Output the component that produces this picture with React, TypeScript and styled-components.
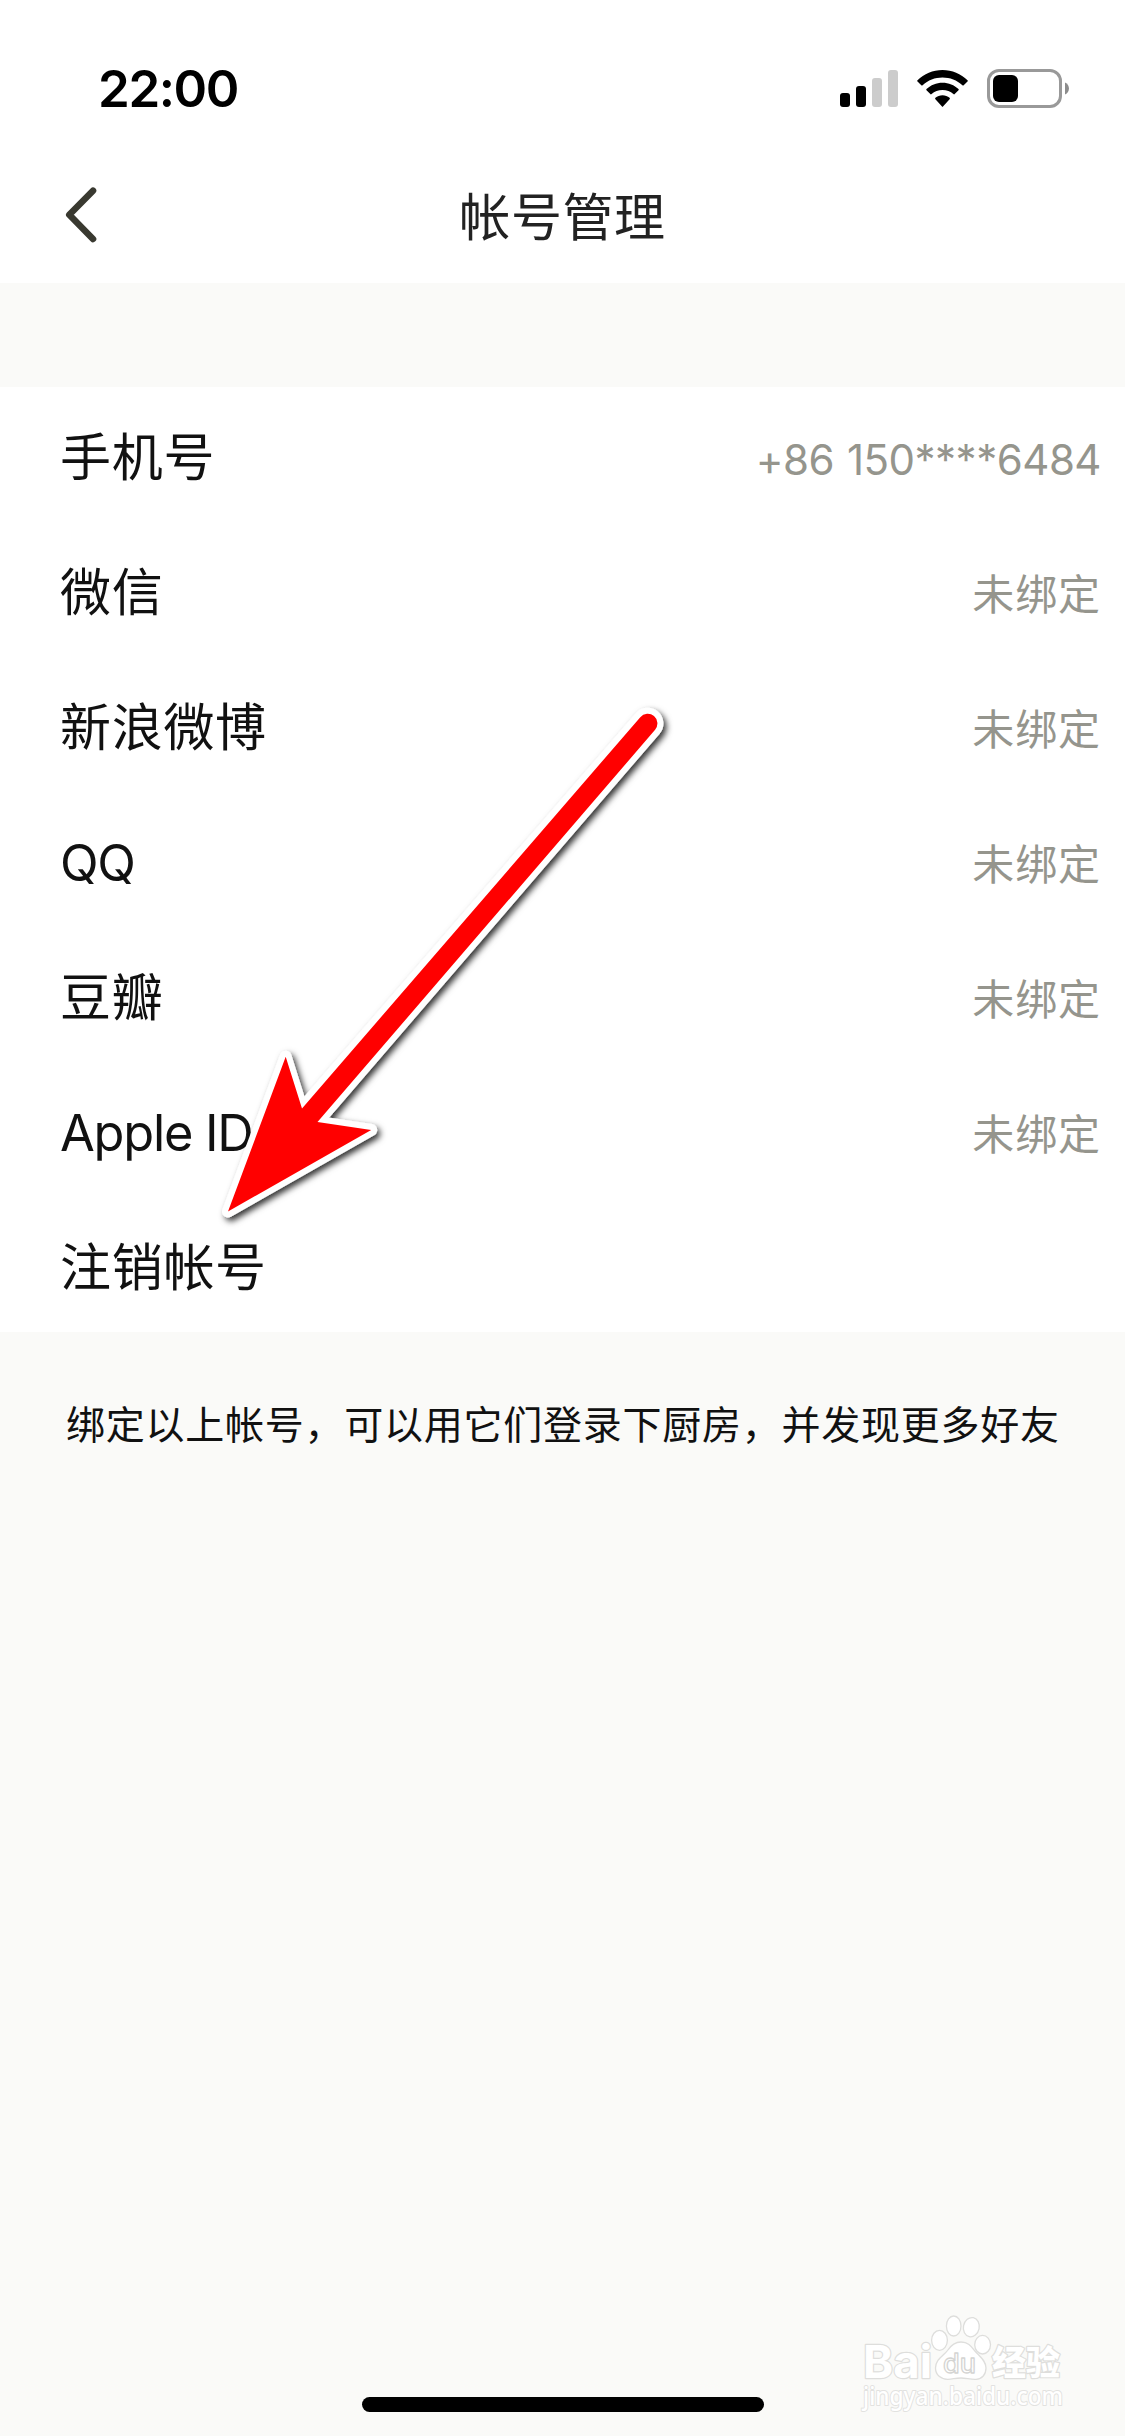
import React from 'react';
import styled, { createGlobalStyle } from 'styled-components';

const GlobalStyle = createGlobalStyle`
  body {
    margin: 0;
    background: #fafaf8;
  }
`;

const Screen = styled.div`
  position: relative;
  width: 1125px;
  height: 2436px;
  display: flex;
  flex-direction: column;
  background: #fafaf8;
  font-family: Inter, 'Noto Sans CJK SC', sans-serif;
  overflow: hidden;
`;

const StatusBar = styled.header`
  flex: none;
  height: 141px;
  box-sizing: border-box;
  padding: 58px 56px 0 98px;
  display: flex;
  justify-content: space-between;
  align-items: flex-start;
  background: #fff;
`;

const Clock = styled.time`
  font-size: 51px;
  line-height: 62px;
  font-weight: 600;
  letter-spacing: -1.4px;
  color: #000;
`;

const StatusIcons = styled.div`
  display: flex;
  align-items: center;
  gap: 19px;
  padding-top: 11px;
`;

const NavBar = styled.nav`
  flex: none;
  height: 142px;
  display: grid;
  grid-template-columns: 160px 1fr 160px;
  background: #fff;
`;

const BackButton = styled.button`
  display: flex;
  align-items: flex-start;
  padding: 45px 0 0 64px;
  border: 0;
  background: none;
`;

const Title = styled.h1`
  margin: 0;
  padding-top: 40px;
  text-align: center;
  font-size: 51px;
  line-height: 74px;
  font-weight: 400;
  letter-spacing: 0.6px;
  color: #222;
`;

const List = styled.ul`
  flex: none;
  list-style: none;
  margin: 104px 0 0;
  padding: 0;
  background: #fff;
`;

const Row = styled.li`
  height: 135px;
  box-sizing: border-box;
  padding: 0 24px 0 60px;
  display: flex;
  justify-content: space-between;
  align-items: center;
`;

const Label = styled.span<{ $latin?: boolean }>`
  padding-top: 6px;
  font-size: ${(p) => (p.$latin ? '50.5px' : '51px')};
  line-height: 75px;
  letter-spacing: ${(p) => (p.$latin ? '-1.25px' : '0.7px')};
  color: #111;
`;

const Value = styled.span<{ $latin?: boolean }>`
  padding-top: 11px;
  font-size: 42px;
  line-height: 62px;
  letter-spacing: ${(p) => (p.$latin ? '-0.5px' : '0.9px')};
  word-spacing: 1.5px;
  color: #95958d;
`;

const Hint = styled.p`
  margin: 0;
  padding: 64px 60px 0 66px;
  font-size: 39px;
  line-height: 58px;
  letter-spacing: 0.75px;
  white-space: nowrap;
  color: #111;
`;

const HomeIndicator = styled.div`
  width: 402px;
  height: 15px;
  margin: auto auto 24px;
  border-radius: 8px;
  background: #000;
`;

const Pointer = styled.svg`
  position: absolute;
  left: 200px;
  top: 680px;
`;

const Watermark = styled.svg`
  position: absolute;
  left: 840px;
  top: 2290px;
`;

const rows: { label: string; value?: string }[] = [
  { label: '手机号', value: '+86 150****6484' },
  { label: '微信', value: '未绑定' },
  { label: '新浪微博', value: '未绑定' },
  { label: 'QQ', value: '未绑定' },
  { label: '豆瓣', value: '未绑定' },
  { label: 'Apple ID', value: '未绑定' },
  { label: '注销帐号' },
];

const isLatin = (text: string) => /^[\x20-\x7e]+$/.test(text);

const SignalIcon = () => (
  <svg width="58" height="37" viewBox="0 0 58 37">
    <rect x="0" y="23" width="10" height="14" rx="3" fill="#000" />
    <rect x="16" y="16" width="10" height="21" rx="3" fill="#000" />
    <rect x="32" y="8" width="10" height="29" rx="3" fill="#ccc" />
    <rect x="48" y="0" width="10" height="37" rx="3" fill="#ccc" />
  </svg>
);

const WifiIcon = () => (
  <svg width="51" height="38" viewBox="0 0 51 38">
    <path d="M25.5 0C15.9 0 7 3.800 .5 10.200Q-.1 10.900 .5 11.500L4.300 15.300Q4.900 15.900 5.600 15.300C11 10.200 18 7.500 25.500 7.500S40 10.200 45.400 15.300Q46.100 15.900 46.700 15.300L50.500 11.500Q51.100 10.900 50.500 10.200C44 3.800 35.100 0 25.500 0Z" />
    <path d="M25.500 12.700C19.300 12.700 13.700 15.100 9.500 19Q8.900 19.700 9.500 20.300L13.300 24.100Q13.900 24.700 14.600 24.100C17.500 21.500 21.300 20 25.500 20S33.500 21.500 36.400 24.100Q37.100 24.700 37.700 24.100L41.500 20.300Q42.100 19.700 41.500 19C37.300 15.100 31.700 12.700 25.500 12.700Z" />
    <path d="M25.500 25.300C22.800 25.300 20.400 26.200 18.400 27.800Q17.700 28.500 18.400 29.200L24.800 36.200Q25.500 37.200 26.200 36.200L32.600 29.200Q33.300 28.500 32.600 27.800C30.600 26.200 28.200 25.300 25.500 25.300Z" />
  </svg>
);

const BatteryIcon = () => (
  <svg width="82" height="39" viewBox="0 0 82 39">
    <rect x="1.500" y="1.500" width="72" height="36" rx="10.500" fill="none" stroke="#999" strokeWidth="3" />
    <rect x="6" y="6" width="25" height="27" rx="6" />
    <path d="M78 13.500C83.300 15.500 83.300 23.500 78 25.500Z" fill="#8c8c8c" />
  </svg>
);

const BackIcon = () => (
  <svg width="34" height="58" viewBox="0 0 34 58" fill="none" stroke="#393930" strokeWidth="6.600" strokeLinecap="round" strokeLinejoin="round">
    <path d="M29 4.700L5.300 28.800L29 53" />
  </svg>
);

const arrow =
  'M28 531.500L85.700 376.700L102 428.500L440.300 37.200A9.700 9.700 0 0 1 455.100 49.800L117.500 442L171.200 450Z';

export default function App() {
  return (
    <>
      <GlobalStyle />
      <Screen>
        <StatusBar>
          <Clock>22:00</Clock>
          <StatusIcons>
            <SignalIcon />
            <WifiIcon />
            <BatteryIcon />
          </StatusIcons>
        </StatusBar>
        <NavBar>
          <BackButton aria-label="返回">
            <BackIcon />
          </BackButton>
          <Title>帐号管理</Title>
        </NavBar>
        <List>
          {rows.map((row) => (
            <Row key={row.label}>
              <Label $latin={isLatin(row.label)}>{row.label}</Label>
              {row.value && <Value $latin={isLatin(row.value)}>{row.value}</Value>}
            </Row>
          ))}
        </List>
        <Hint>绑定以上帐号，可以用它们登录下厨房，并发现更多好友</Hint>
        <HomeIndicator />
        <Pointer width="490" height="570" viewBox="0 0 490 570">
          <defs>
            <filter id="drop" x="-10%" y="-10%" width="125%" height="125%">
              <feDropShadow dx="3" dy="3.500" stdDeviation="3" floodColor="#000" floodOpacity="0.8" />
            </filter>
          </defs>
          <path d={arrow} fill="#fff" stroke="#fff" strokeWidth="12" strokeLinejoin="round" filter="url(#drop)" />
          <path d={arrow} fill="#f00" />
        </Pointer>
        <Watermark width="260" height="130" viewBox="0 0 260 130" fill="#fff" stroke="#dededc" strokeWidth="1.300" strokeLinejoin="round">
          <g paintOrder="stroke" fontFamily="Inter, 'Noto Sans CJK SC', sans-serif" fontWeight="700">
            <text x="23" y="88" fontSize="45" strokeWidth="2.400" textLength="69" lengthAdjust="spacingAndGlyphs">Bai</text>
            <text x="152" y="85" fontSize="34" strokeWidth="2.400" fontWeight="900" textLength="68" lengthAdjust="spacingAndGlyphs">经验</text>
            <text x="23" y="114.500" fontSize="25" strokeWidth="2" fontWeight="500" stroke="#e2e2e0" fontFamily="'Noto Sans', sans-serif" textLength="200" lengthAdjust="spacingAndGlyphs">jingyan.baidu.com</text>
          </g>
          <ellipse cx="99.500" cy="50.300" rx="7.900" ry="10" />
          <ellipse cx="113.700" cy="36" rx="7.300" ry="10" />
          <ellipse cx="131.300" cy="37.200" rx="7.900" ry="9.700" transform="rotate(12 131.300 37.200)" />
          <ellipse cx="142.600" cy="54.700" rx="7.900" ry="9.300" />
          <path d="M121 52C114 52 110.500 56 107.500 60.500C104 65.500 95.500 69 95.500 78C95.500 85 101 89.500 108 89.300C113 89 116 88 121 88S131 89.700 136 89.300C142 89 146 84.500 146 78C146 70 138.500 65.500 134.500 60.500C131 56 128 52 121 52Z" />
          <text x="103" y="82.500" fontSize="27" fontFamily="Inter, sans-serif" fontWeight="500" textLength="33" lengthAdjust="spacingAndGlyphs" stroke="#d4d4d2">du</text>
        </Watermark>
      </Screen>
    </>
  );
}
